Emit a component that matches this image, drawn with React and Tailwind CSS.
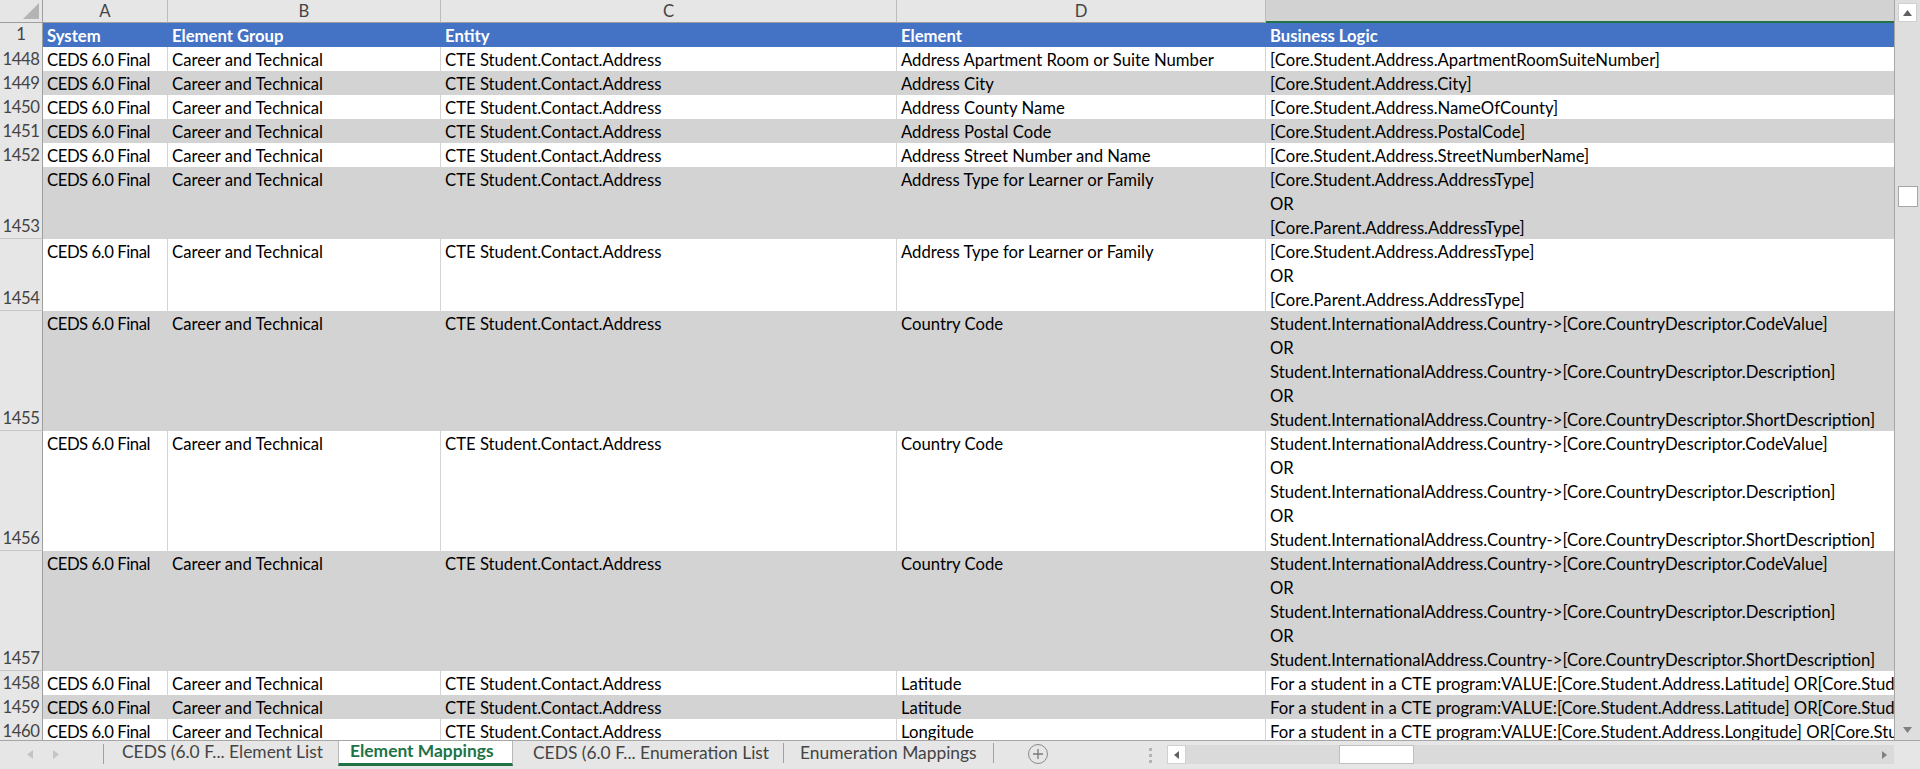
const CTE = "CTE Student.Contact.Address";
const INTL = [
  "Student.InternationalAddress.Country->[Core.CountryDescriptor.CodeValue]",
  "OR",
  "Student.InternationalAddress.Country->[Core.CountryDescriptor.Description]",
  "OR",
  "Student.InternationalAddress.Country->[Core.CountryDescriptor.ShortDescription]",
];
const ADDR_TYPE = [
  "[Core.Student.Address.AddressType]",
  "OR",
  "[Core.Parent.Address.AddressType]",
];

const rows = [
  { n: 1448, element: "Address Apartment Room or Suite Number", logic: ["[Core.Student.Address.ApartmentRoomSuiteNumber]"] },
  { n: 1449, element: "Address City", logic: ["[Core.Student.Address.City]"] },
  { n: 1450, element: "Address County Name", logic: ["[Core.Student.Address.NameOfCounty]"] },
  { n: 1451, element: "Address Postal Code", logic: ["[Core.Student.Address.PostalCode]"] },
  { n: 1452, element: "Address Street Number and Name", logic: ["[Core.Student.Address.StreetNumberName]"] },
  { n: 1453, element: "Address Type for Learner or Family", logic: ADDR_TYPE },
  { n: 1454, element: "Address Type for Learner or Family", logic: ADDR_TYPE },
  { n: 1455, element: "Country Code", logic: INTL },
  { n: 1456, element: "Country Code", logic: INTL },
  { n: 1457, element: "Country Code", logic: INTL },
  { n: 1458, element: "Latitude", logic: ["For a student in a CTE program:VALUE:[Core.Student.Address.Latitude] OR[Core.Student.InternationalAddress.Latitude]"] },
  { n: 1459, element: "Latitude", logic: ["For a student in a CTE program:VALUE:[Core.Student.Address.Latitude] OR[Core.Student.InternationalAddress.Latitude]"] },
  { n: 1460, element: "Longitude", logic: ["For a student in a CTE program:VALUE:[Core.Student.Address.Longitude] OR[Core.Student.InternationalAddress.Longitude]"] },
];

const cols = "grid grid-cols-[43px_125px_273px_456px_369px_1fr]";

function ColumnHeader() {
  return (
    <div className={`${cols} h-[23px] bg-[#e6e6e6] text-[#444] text-[16.7px] leading-[22px] shrink-0`}>
      <div className="border-r border-b border-[#9e9e9e] flex items-end justify-end pr-[3px] pb-[3px]">
        <svg width="16" height="16" viewBox="0 0 16 16">
          <polygon points="16,0 16,16 0,16" fill="#b4b4b4" />
        </svg>
      </div>
      {["A", "B", "C", "D"].map((l) => (
        <div key={l} className="border-r border-b border-[#bcbcbc] border-b-[#9e9e9e] text-center">
          {l}
        </div>
      ))}
      <div className="bg-[#d2d2d2] border-b-2 border-[#217346]"></div>
    </div>
  );
}

function Cell({ children, tone, className = "" }) {
  const b =
    tone === "blue"
      ? "border-[#4472c4]"
      : tone === "gray"
      ? "border-[#d3d3d3]"
      : "border-[#d4d4d4]";
  return (
    <div className={`border-r ${b} px-[4px] pt-[1px] whitespace-nowrap overflow-hidden ${className}`}>
      {children}
    </div>
  );
}

function RowNum({ n, tall }) {
  return (
    <div
      className={`bg-[#e6e6e6] text-[#444] border-r border-b border-r-[#9e9e9e] border-b-[#c8c8c8] flex justify-center tracking-[-0.4px] ${
        tall ? "items-end" : "items-start pt-[1px]"
      } leading-[23px]`}
    >
      {n}
    </div>
  );
}

function DataRow({ row, gray }) {
  const tone = gray ? "gray" : "white";
  const h = row.logic.length * 24;
  return (
    <div
      className={`${cols} ${gray ? "bg-[#d3d3d3]" : "bg-white"} text-black leading-[24px] shrink-0`}
      style={{ height: h }}
    >
      <RowNum n={row.n} tall={row.logic.length > 1} />
      <Cell tone={tone} className="tracking-[-0.45px]">CEDS 6.0 Final</Cell>
      <Cell tone={tone}>Career and Technical</Cell>
      <Cell tone={tone}>{CTE}</Cell>
      <Cell tone={tone}>{row.element}</Cell>
      <div className="px-[4px] pt-[1px] whitespace-nowrap overflow-hidden">
        {row.logic.map((l, i) => (
          <div key={i} className="h-[24px]">
            {l}
          </div>
        ))}
      </div>
    </div>
  );
}

function VScroll() {
  return (
    <div className="w-[26px] shrink-0 border-l border-[#a6a6a6] bg-[#dedede] flex flex-col items-center pt-[3px] pb-[2px]">
      <div className="w-[19px] h-[19px] bg-white border border-[#d0d0d0] flex items-center justify-center">
        <svg width="9" height="6" viewBox="0 0 9 6">
          <polygon points="4.5,0 9,6 0,6" fill="#606060" />
        </svg>
      </div>
      <div className="mt-[164px] w-[20px] h-[21px] bg-white border border-[#a6a6a6]"></div>
      <div className="flex-1"></div>
      <div className="w-[19px] h-[17px] flex items-center justify-center">
        <svg width="9" height="6" viewBox="0 0 9 6">
          <polygon points="0,0 9,0 4.5,6" fill="#808080" />
        </svg>
      </div>
    </div>
  );
}

function TabBar() {
  return (
    <div className="h-[29px] shrink-0 bg-[#e6e6e6] border-t border-[#a6a6a6] flex items-start text-[17.4px] text-[#444] leading-[22px]">
      <div className="w-[104px] flex items-center pl-[27px] gap-[20px] border-r border-[#a0a0a0] my-[3px] h-[20px]">
        <svg width="6" height="9" viewBox="0 0 6 9">
          <polygon points="6,0 6,9 0,4.5" fill="#c4c4c4" />
        </svg>
        <svg width="6" height="9" viewBox="0 0 6 9">
          <polygon points="0,0 6,4.5 0,9" fill="#c4c4c4" />
        </svg>
      </div>
      <div className="w-[234px] h-[22px] flex items-center pl-[18px]">CEDS (6.0 F... Element List</div>
      <div className="w-[175px] h-[25px] bg-white border-x border-[#b8b8b8] border-b-[3px] border-b-[#217346] flex items-center pl-[11px] pb-[2px] font-bold text-[#217346]">
        Element Mappings
      </div>
      <div className="w-[271px] flex items-center pl-[20px] border-r border-[#a0a0a0] my-[2px] h-[20px]">
        CEDS (6.0 F... Enumeration List
      </div>
      <div className="w-[210px] h-[20px] my-[2px] flex items-center pl-[16px] border-r border-[#a0a0a0]">
        Enumeration Mappings
      </div>
      <div className="w-[88px] h-[26px] flex items-center justify-center">
        <div className="w-[20px] h-[20px] rounded-full border border-[#8a8a8a] flex items-center justify-center">
          <svg width="10" height="10" viewBox="0 0 10 10">
            <path d="M5 0V10M0 5H10" stroke="#7a7a7a" strokeWidth="1.3" />
          </svg>
        </div>
      </div>
      <div className="w-[72px] h-[26px] flex items-center justify-end pr-[2px]">
        <div className="flex flex-col gap-[3px] pt-[2px]">
          <div className="w-[3px] h-[3px] bg-[#b4b4b4]"></div>
          <div className="w-[3px] h-[3px] bg-[#b4b4b4]"></div>
          <div className="w-[3px] h-[3px] bg-[#b4b4b4]"></div>
        </div>
      </div>
      <div className="flex-1 flex mt-[4px] h-[19px] mr-[26px] ml-[13px] bg-[#dadada]">
        <div className="w-[19px] h-[19px] bg-white border border-[#d0d0d0] flex items-center justify-center">
          <svg width="5" height="8" viewBox="0 0 5 8">
            <polygon points="5,0 5,8 0,4" fill="#606060" />
          </svg>
        </div>
        <div className="w-[153px]"></div>
        <div className="w-[75px] h-[19px] bg-white border border-[#c0c0c0]"></div>
        <div className="flex-1"></div>
        <div className="w-[19px] h-[19px] flex items-center justify-center">
          <svg width="5" height="8" viewBox="0 0 5 8">
            <polygon points="0,0 5,4 0,8" fill="#808080" />
          </svg>
        </div>
      </div>
    </div>
  );
}

export default function App() {
  return (
    <div className="w-[1920px] h-[769px] overflow-hidden flex flex-col bg-white font-['Lato',sans-serif] text-[16.7px]">
      <div className="h-[740px] flex shrink-0 overflow-hidden">
        <div className="flex-1 flex flex-col overflow-hidden">
          <ColumnHeader />
          <div className={`${cols} h-[24px] bg-[#4472c4] text-white font-bold leading-[24px] shrink-0`}>
            <div className="bg-[#e6e6e6] text-[#444] font-normal border-r border-b border-r-[#9e9e9e] border-b-[#c8c8c8] text-center leading-[23px]">
              1
            </div>
            <Cell tone="blue">System</Cell>
            <Cell tone="blue">Element Group</Cell>
            <Cell tone="blue">Entity</Cell>
            <Cell tone="blue">Element</Cell>
            <div className="px-[4px] pt-[1px]">Business Logic</div>
          </div>
          {rows.map((r, i) => (
            <DataRow key={r.n} row={r} gray={i % 2 === 1} />
          ))}
        </div>
        <VScroll />
      </div>
      <TabBar />
    </div>
  );
}
